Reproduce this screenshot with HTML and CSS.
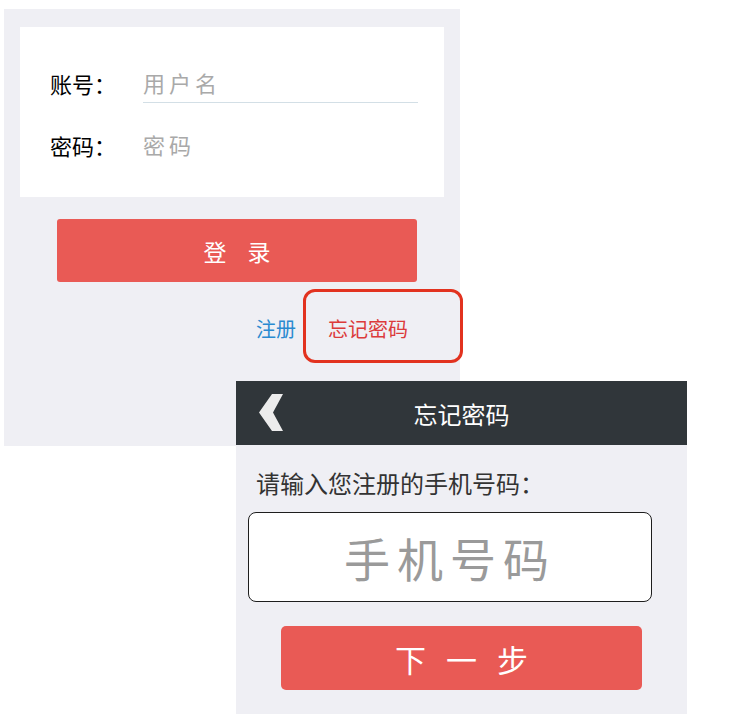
FILE: index.html
```html
<!DOCTYPE html>
<html lang="zh-CN">
<head>
<meta charset="utf-8">
<title>登录</title>
<link rel="stylesheet" href="styles.css">
</head>
<body>
<div class="canvas">
  <section class="screen login">
    <div class="card">
      <div class="row">
        <span class="label">账号：</span>
        <span class="field underline">用户名</span>
      </div>
      <div class="row">
        <span class="label">密码：</span>
        <span class="field">密码</span>
      </div>
    </div>
    <div class="btn login-btn"><span>登</span><span>录</span></div>
    <div class="links">
      <span class="link-reg">注册</span>
      <span class="link-forgot">忘记密码</span>
    </div>
  </section>

  <div class="highlight"></div>

  <section class="screen forgot">
    <header class="bar">
      <svg class="back" width="26" height="40" viewBox="0 0 26 40">
        <polygon points="14,1 25,1 15,19.5 25,38 14,38 1,19.5" fill="#ececec"/>
      </svg>
      <span class="bar-title">忘记密码</span>
    </header>
    <p class="prompt">请输入您注册的手机号码：</p>
    <div class="phone">手机号码</div>
    <div class="btn next-btn"><span>下</span><span>一</span><span>步</span></div>
  </section>
</div>
</body>
</html>
```

FILE: styles.css
```css
* { box-sizing: border-box; }

html, body {
  margin: 0;
  padding: 0;
  background: #ffffff;
}

body {
  font-family: "Noto Sans CJK SC", "Noto Sans", sans-serif;
  width: 733px;
  height: 714px;
  overflow: hidden;
}

.canvas {
  position: relative;
  width: 733px;
  height: 714px;
}

.screen {
  background: #efeff4;
}

.login {
  position: absolute;
  left: 4px;
  top: 9px;
  width: 456px;
  height: 437px;
  display: flex;
  flex-direction: column;
}

.card {
  margin: 18px 16px 0 16px;
  height: 170px;
  background: #ffffff;
  padding: 36px 26px 0 30px;
  display: flex;
  flex-direction: column;
  gap: 22px;
}

.row {
  display: flex;
  align-items: center;
  height: 40px;
}

.label {
  width: 93px;
  font-size: 22px;
  color: #000;
  line-height: 40px;
}

.field {
  flex: 1;
  height: 40px;
  line-height: 38px;
  font-size: 22px;
  color: #a9a9a9;
  letter-spacing: 4px;
}

.underline {
  border-bottom: 1px solid #d3dfe6;
}

.btn {
  background: #e95a55;
  color: #ffffff;
  display: flex;
  align-items: center;
  justify-content: center;
}

.login-btn {
  margin: 22px 0 0 53px;
  width: 360px;
  height: 63px;
  border-radius: 3px;
  font-size: 23px;
  gap: 21px;
}

.links {
  margin-top: 32px;
  height: 30px;
  padding-left: 252px;
  display: flex;
  align-items: center;
  gap: 32px;
  font-size: 20px;
  line-height: 30px;
}

.link-reg { color: #2a8ad0; }
.link-forgot { color: #dc3b3b; }

.highlight {
  position: absolute;
  left: 303px;
  top: 289px;
  width: 160px;
  height: 74px;
  border: 3px solid #e2321f;
  border-radius: 12px;
}

.forgot {
  position: absolute;
  left: 236px;
  top: 381px;
  width: 451px;
  height: 333px;
  display: flex;
  flex-direction: column;
}

.bar {
  position: relative;
  height: 64px;
  background: #30363a;
  display: flex;
  align-items: center;
  justify-content: center;
}

.back {
  position: absolute;
  left: 22px;
  top: 12px;
}

.bar-title {
  color: #ffffff;
  font-size: 24px;
}

.prompt {
  margin: 23px 0 0 0;
  padding-left: 20px;
  font-size: 24px;
  line-height: 30px;
  color: #333333;
}

.phone {
  margin: 14px 0 0 12px;
  width: 404px;
  height: 90px;
  background: #ffffff;
  border: 1px solid #1e1e1e;
  border-radius: 8px;
  display: flex;
  align-items: center;
  justify-content: center;
  font-size: 46px;
  letter-spacing: 7px;
  color: #9a9a9a;
}

.next-btn {
  margin: 24px 0 0 45px;
  width: 361px;
  height: 64px;
  border-radius: 5px;
  font-size: 31px;
  gap: 20px;
}
```
